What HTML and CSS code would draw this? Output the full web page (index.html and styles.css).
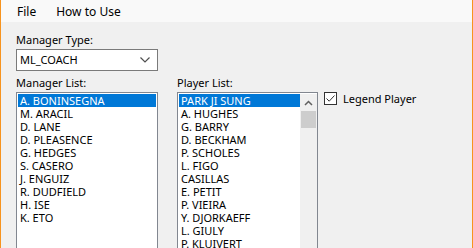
FILE: index.html
```html
<!DOCTYPE html>
<html lang="en">
<head>
<meta charset="UTF-8">
<title>Manager Editor</title>
<link rel="stylesheet" href="styles.css">
</head>
<body>
    <div class="window">
        <!-- menu -->
        <div class="menubar">
            <span class="menu-item">File</span>
            <span class="menu-item">How to Use</span>
        </div>

        <div class="content">
            <div class="label">Manager Type:</div>
            <div class="combo">
                <span class="combo-text">ML_COACH</span>
                <svg class="combo-arrow" width="10" height="6" viewBox="0 0 10 6">
                    <path d="M0.5 0.5 L5 5 L9.5 0.5" fill="none" stroke="#505050" stroke-width="1.2"/>
                </svg>
            </div>

            <div class="lists">
                <div class="col">
                    <div class="label">Manager List:</div>
                    <div class="listbox manager-list">
                        <div class="item selected">A. BONINSEGNA</div>
                        <div class="item">M. ARACIL</div>
                        <div class="item">D. LANE</div>
                        <div class="item">D. PLEASENCE</div>
                        <div class="item">G. HEDGES</div>
                        <div class="item">S. CASERO</div>
                        <div class="item">J. ENGUIZ</div>
                        <div class="item">R. DUDFIELD</div>
                        <div class="item">H. ISE</div>
                        <div class="item">K. ETO</div>
                    </div>
                </div>

                <div class="col">
                    <div class="label">Player List:</div>
                    <div class="listbox player-list">
                        <div class="items">
                            <div class="item selected">PARK JI SUNG</div>
                            <div class="item">A. HUGHES</div>
                            <div class="item">G. BARRY</div>
                            <div class="item">D. BECKHAM</div>
                            <div class="item">P. SCHOLES</div>
                            <div class="item">L. FIGO</div>
                            <div class="item">CASILLAS</div>
                            <div class="item">E. PETIT</div>
                            <div class="item">P. VIEIRA</div>
                            <div class="item">Y. DJORKAEFF</div>
                            <div class="item">L. GIULY</div>
                            <div class="item">P. KLUIVERT</div>
                        </div>
                        <div class="scrollbar">
                            <div class="scroll-btn">
                                <svg width="9" height="6" viewBox="0 0 9 6">
                                    <path d="M1 5 L4.5 1.5 L8 5" fill="none" stroke="#606060" stroke-width="1.5"/>
                                </svg>
                            </div>
                            <div class="thumb"></div>
                        </div>
                    </div>
                </div>

                <label class="check">
                    <span class="box">
                        <svg width="11" height="11" viewBox="0 0 11 11">
                            <path d="M1.5 5.5 L4.2 8.2 L9.5 2.5" fill="none" stroke="#333" stroke-width="1"/>
                        </svg>
                    </span>
                    Legend Player
                </label>
            </div>
        </div>
    </div>
</body>
</html>
```

FILE: styles.css
```css
body {
    margin: 0;
    width: 473px;
    height: 248px;
    overflow: hidden;
    font-family: "Noto Sans", "Open Sans", sans-serif;
    font-size: 11px;
    color: #000000;
    background-color: #f0f0f0;
}
.window {
    height: 248px;
    border-left: 1px solid #f7931e;
    border-right: 1px solid #f7931e;
    background-color: #f0f0f0;
}
.menubar {
    height: 22px;
    background-color: #f9f9f9;
    display: flex;
    align-items: center;
    padding-left: 9px;
    font-size: 12px;
}
.menu-item {
    padding: 0 7px;
    margin-right: 6px;
}
.content {
    padding-left: 15px;
    padding-top: 10px;
}
.label {
    height: 17px;
    line-height: 15px;
}
.combo {
    width: 137px;
    height: 20px;
    border: 1px solid #7a7a7a;
    background-color: #ffffff;
    display: flex;
    align-items: center;
    justify-content: space-between;
    padding-left: 3px;
    margin-bottom: 4px;
}
.combo-text {
    line-height: 20px;
}
.combo-arrow {
    margin-right: 7px;
}
.lists {
    display: flex;
    align-items: flex-start;
}
.col {
    margin-right: 19px;
}
.col + .col {
    margin-right: 6px;
}
.listbox {
    border: 1px solid #828790;
    background-color: #ffffff;
    height: 170px;
    padding: 1px;
}
.manager-list {
    width: 138px;
}
.player-list {
    width: 137px;
    display: flex;
}
.items {
    flex: 1;
}
.item {
    height: 13px;
    line-height: 13px;
    padding-left: 2px;
    white-space: nowrap;
}
.item.selected {
    background-color: #0078d7;
    color: #ffffff;
}
.scrollbar {
    width: 17px;
    background-color: #f0f0f0;
    margin: 0 -1px 0 0;
    display: flex;
    flex-direction: column;
    align-items: center;
}
.scroll-btn {
    height: 17px;
    display: flex;
    align-items: center;
    justify-content: center;
}
.thumb {
    width: 15px;
    height: 17px;
    background-color: #cdcdcd;
}
.check {
    display: flex;
    align-items: center;
    margin-top: 16px;
    line-height: 15px;
}
.box {
    width: 11px;
    height: 11px;
    border: 1px solid #333333;
    background-color: #ffffff;
    margin-right: 6px;
    display: flex;
}
```
